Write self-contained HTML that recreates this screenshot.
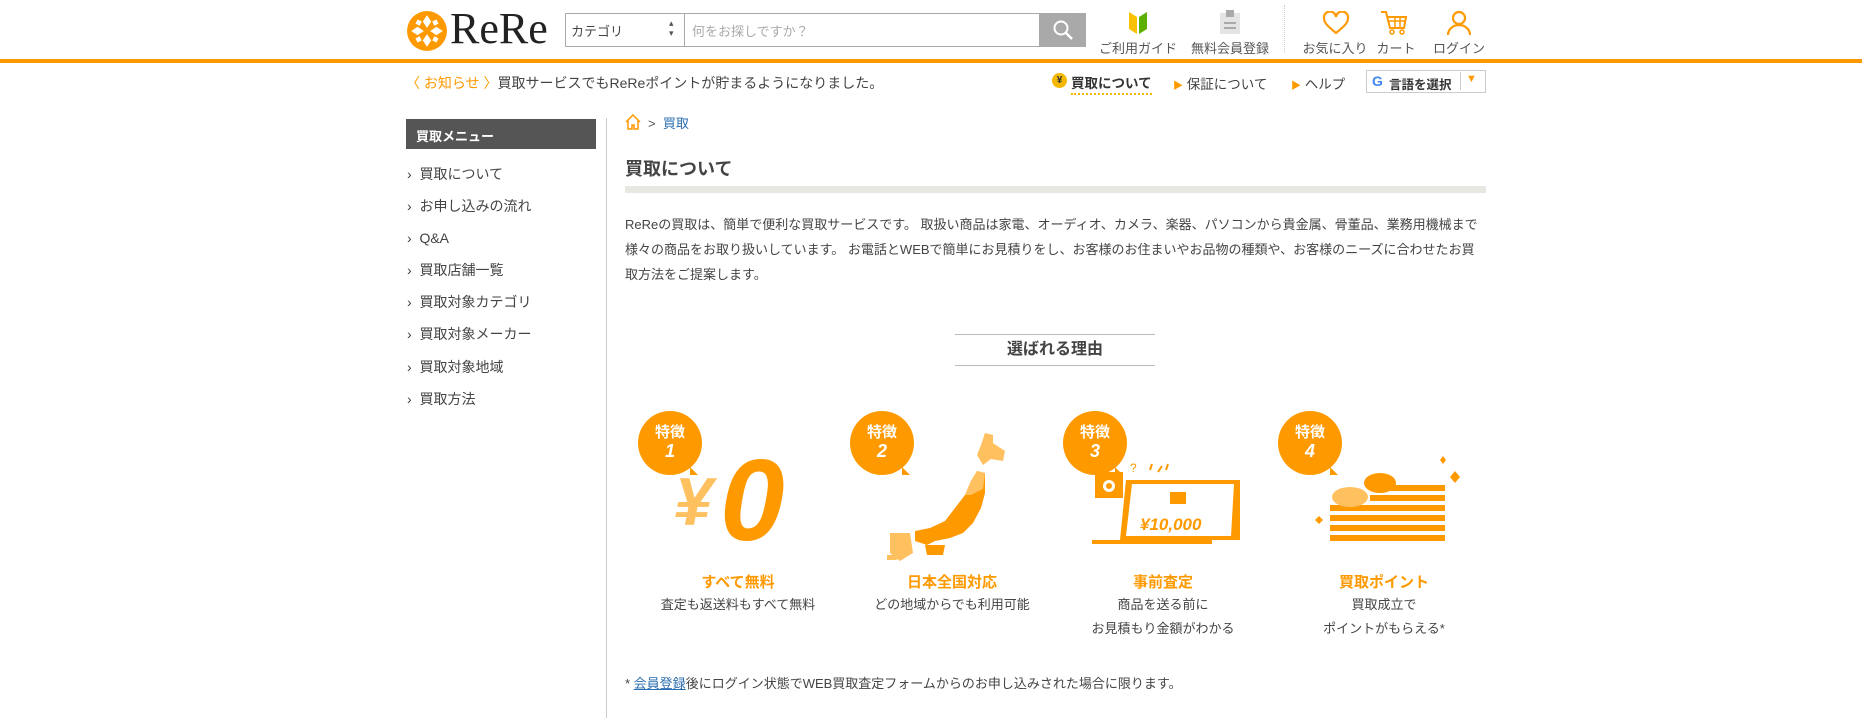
<!DOCTYPE html>
<html><head><meta charset="utf-8"><style>
*{margin:0;padding:0;box-sizing:border-box}
body{width:1862px;height:707px;overflow:hidden;background:#fff;font-family:"Liberation Sans","Noto Sans CJK JP",sans-serif;color:#333;position:relative}
.a{position:absolute;white-space:nowrap}
.hl{font-size:13px;color:#555;text-align:center;transform:translateX(-50%)}
.side{font-size:14px;color:#444}
.ft{color:#f90;font-weight:bold;font-size:15px;transform:translateX(-50%);text-align:center}
.fd{font-size:13px;color:#444;transform:translateX(-50%);text-align:center;line-height:24px}
.bub{position:absolute;width:64px;height:64px;border-radius:50%;background:#f90;color:#fff;font-weight:bold;text-align:center;font-size:15px;line-height:19px;padding-top:12px}
.bub:after{content:"";position:absolute;right:4px;bottom:0;border-left:8px solid #f90;border-top:8px solid transparent;border-bottom:0 solid transparent}
.bub i{font-size:18px}
</style></head><body>
<!-- logo -->
<svg class="a" style="left:406px;top:10px" width="42" height="42" viewBox="0 0 40 40"><circle cx="20" cy="20" r="19" fill="#f90"/><g fill="#fff"><path d="M20 5l4 6-4 6-4-6z"/><path d="M20 23l4 6-4 6-4-6z"/><path d="M5 20l6-4 6 4-6 4z"/><path d="M23 20l6-4 6 4-6 4z"/><path d="M11 9l4 2-2 4-4-2z"/><path d="M29 9l2 4-4 2-2-4z"/><path d="M9 27l4-2 2 4-4 2z"/><path d="M27 25l4 2-2 4-4-2z"/></g></svg>
<div class="a" style="left:450px;top:3px;font-family:'Liberation Serif',serif;font-size:44px;color:#222">ReRe</div>
<!-- search -->
<div class="a" style="left:565px;top:13px;width:475px;height:34px;border:1px solid #aaa"></div>
<div class="a" style="left:684px;top:13px;width:1px;height:34px;background:#aaa"></div>
<div class="a" style="left:571px;top:21px;font-size:13px;color:#444">カテゴリ</div>
<div class="a" style="left:669px;top:18px;font-size:9px;color:#555;line-height:10px">▴<br>▾</div>
<div class="a" style="left:692px;top:21px;font-size:13px;color:#aaa">何をお探しですか？</div>
<div class="a" style="left:1040px;top:13px;width:46px;height:34px;background:#a9a9a9"></div>
<svg class="a" style="left:1052px;top:19px" width="22" height="22"><circle cx="9" cy="9" r="6.5" stroke="#fff" stroke-width="2" fill="none"/><path d="M14 14l6 6" stroke="#fff" stroke-width="2.5"/></svg>
<!-- header links -->
<svg class="a" style="left:1128px;top:10px" width="20" height="25"><path d="M1 2l8 5v17l-8-5z" fill="#fbc000"/><path d="M19 2l-8 5v17l8-5z" fill="#5cb000"/></svg>
<div class="a hl" style="left:1138px;top:38px">ご利用ガイド</div>
<svg class="a" style="left:1219px;top:9px" width="22" height="26"><rect x="1" y="4" width="20" height="21" fill="#e4e4e4"/><rect x="7" y="1" width="8" height="7" fill="#aaa"/><rect x="5" y="13" width="12" height="2" fill="#aaa"/><rect x="5" y="18" width="12" height="2" fill="#aaa"/></svg>
<div class="a hl" style="left:1230px;top:38px">無料会員登録</div>
<div class="a" style="left:1284px;top:5px;height:48px;border-left:1px dotted #ccc"></div>
<svg class="a" style="left:1322px;top:11px" width="28" height="24"><path d="M14 22C4 14 2 11 2 7a6 6 0 0 1 12-1a6 6 0 0 1 12 1c0 4-2 7-12 15z" fill="none" stroke="#f90" stroke-width="2.2"/></svg>
<div class="a hl" style="left:1335px;top:38px">お気に入り</div>
<svg class="a" style="left:1380px;top:10px" width="28" height="26"><path d="M1 2h5l4 16h14l2-11H8" fill="none" stroke="#f90" stroke-width="2"/><path d="M9 11h16M15 7v11M20 7v11" stroke="#f90" stroke-width="1.5"/><circle cx="12" cy="22" r="2" fill="none" stroke="#f90" stroke-width="1.5"/><circle cx="22" cy="22" r="2" fill="none" stroke="#f90" stroke-width="1.5"/></svg>
<div class="a hl" style="left:1396px;top:38px">カート</div>
<svg class="a" style="left:1446px;top:10px" width="26" height="26"><circle cx="13" cy="8" r="6" fill="none" stroke="#f90" stroke-width="2.2"/><path d="M2 25a11 10 0 0 1 22 0" fill="none" stroke="#f90" stroke-width="2.2"/></svg>
<div class="a hl" style="left:1459px;top:38px">ログイン</div>
<div class="a" style="left:0;top:59px;width:1862px;height:4px;background:#f90"></div>
<!-- notice -->
<div class="a" style="left:406px;top:73px;font-size:14px;color:#444"><span style="color:#f90">〈 お知らせ 〉</span>買取サービスでもReReポイントが貯まるようになりました。</div>
<div class="a" style="left:1052px;top:73px;width:15px;height:15px;border-radius:50%;background:#f5b800;color:#333;font-size:10px;text-align:center;line-height:15px;font-weight:bold">¥</div>
<div class="a" style="left:1071px;top:72px;font-size:13.5px;font-weight:bold;color:#333;border-bottom:2px dotted #f5b800;padding-bottom:1px">買取について</div>
<div class="a" style="left:1173px;top:73px;font-size:13.5px;color:#444"><span style="color:#f90;font-size:10px">▶</span> 保証について</div>
<div class="a" style="left:1291px;top:73px;font-size:13.5px;color:#444"><span style="color:#f90;font-size:10px">▶</span> ヘルプ</div>
<div class="a" style="left:1366px;top:70px;width:120px;height:23px;border:1px solid #ccc"></div>
<div class="a" style="left:1372px;top:73px;font-size:14px;font-weight:bold;color:#4285f4">G</div>
<div class="a" style="left:1389px;top:74px;font-size:12.5px;font-weight:bold;color:#333">言語を選択</div>
<div class="a" style="left:1460px;top:72px;height:18px;border-left:1px solid #ccc"></div>
<div class="a" style="left:1466px;top:73px;font-size:11px;color:#f90">▼</div>
<!-- sidebar -->
<div class="a" style="left:406px;top:119px;width:190px;height:30px;background:#555;color:#fff;font-size:13px;font-weight:bold;padding:7px 10px">買取メニュー</div>
<div class="a side" style="left:407px;top:158px;line-height:32.1px">
<div>›&nbsp; 買取について</div><div>›&nbsp; お申し込みの流れ</div><div>›&nbsp; Q&amp;A</div><div>›&nbsp; 買取店舗一覧</div><div>›&nbsp; 買取対象カテゴリ</div><div>›&nbsp; 買取対象メーカー</div><div>›&nbsp; 買取対象地域</div><div>›&nbsp; 買取方法</div></div>
<div class="a" style="left:606px;top:118px;width:1px;height:600px;background:#ccc"></div>
<!-- main -->
<svg class="a" style="left:625px;top:114px" width="16" height="16"><path d="M1 8L8 1l7 7M3 6v9h4v-4h2v4h4V6" fill="none" stroke="#f90" stroke-width="1.5"/></svg>
<div class="a" style="left:648px;top:113px;font-size:13px;color:#555">&gt; &nbsp;<span style="color:#2a6db0">買取</span></div>
<div class="a" style="left:625px;top:155px;font-size:18px;font-weight:bold;color:#444">買取について</div>
<div class="a" style="left:625px;top:186px;width:861px;height:7px;background:#e8e8e2"></div>
<div class="a" style="left:625px;top:212px;font-size:13px;color:#444;line-height:25px;white-space:normal;width:880px">ReReの買取は、簡単で便利な買取サービスです。 取扱い商品は家電、オーディオ、カメラ、楽器、パソコンから貴金属、骨董品、業務用機械まで<br>様々の商品をお取り扱いしています。 お電話とWEBで簡単にお見積りをし、お客様のお住まいやお品物の種類や、お客様のニーズに合わせたお買<br>取方法をご提案します。</div>
<div class="a" style="left:955px;top:334px;width:200px;height:32px;border-top:1px solid #bbb;border-bottom:1px solid #bbb;text-align:center;font-size:16px;font-weight:bold;color:#444;line-height:30px">選ばれる理由</div>
<!-- features -->
<div class="bub" style="left:638px;top:411px">特徴<br><i>1</i></div>
<div class="bub" style="left:850px;top:411px">特徴<br><i>2</i></div>
<div class="bub" style="left:1063px;top:411px">特徴<br><i>3</i></div>
<div class="bub" style="left:1278px;top:411px">特徴<br><i>4</i></div>
<div class="a" style="left:674px;top:462px;font-size:68px;font-weight:bold;color:#ffc060;font-style:italic;line-height:80px">¥</div>
<div class="a" style="left:720px;top:438px;font-size:116px;font-weight:bold;color:#f90;font-style:italic;line-height:124px">0</div>
<svg class="a" style="left:885px;top:433px" width="140" height="130"><path d="M100 0L108 2L108 10L120 18L118 28L106 26L98 32L92 22L96 12Z" fill="#ffc060"/><path d="M92 38L100 40L100 60L96 75L88 90L78 100L65 105L50 108L42 112L30 108L30 98L45 95L60 88L70 75L80 62L86 48Z" fill="#f90"/><path d="M92 38L100 40L98 56L86 62L80 62L86 48Z" fill="#ffc060"/><path d="M40 112L60 112L58 122L42 122Z" fill="#f90"/><path d="M5 100L25 100L28 120L15 128L5 120Z" fill="#ffc060"/><rect x="2" y="122" width="10" height="5" fill="#ffc060"/></svg>
<svg class="a" style="left:1090px;top:460px" width="150" height="85"><rect x="5" y="12" width="28" height="26" fill="#f90"/><circle cx="19" cy="26" r="6" fill="#fff"/><circle cx="19" cy="26" r="3" fill="#f90"/><text x="40" y="12" fill="#f90" font-size="12" font-family="Liberation Sans">?</text><path d="M60 10l2 -6M68 12l4 -6M76 10l2 -6" stroke="#f90" stroke-width="2"/><path d="M36 20h118l-4 60H30z" fill="#f90"/><path d="M42 24h102l-3 52H36z" fill="#fff"/><rect x="80" y="32" width="16" height="12" fill="#f90"/><text x="50" y="70" fill="#f90" font-size="17" font-weight="bold" font-style="italic" font-family="Liberation Sans">¥10,000</text><rect x="2" y="80" width="120" height="4" fill="#f90"/></svg>
<svg class="a" style="left:1300px;top:455px" width="165" height="90"><g fill="#f90"><rect x="70" y="30" width="75" height="6"/><rect x="70" y="40" width="75" height="6"/><rect x="70" y="50" width="75" height="6"/><rect x="70" y="60" width="75" height="6"/><rect x="70" y="70" width="75" height="6"/><rect x="30" y="50" width="40" height="6"/><rect x="30" y="60" width="40" height="6"/><rect x="30" y="70" width="40" height="6"/><rect x="30" y="80" width="115" height="6"/></g><ellipse cx="50" cy="42" rx="18" ry="10" fill="#ffc060"/><ellipse cx="80" cy="28" rx="16" ry="10" fill="#f90"/><path d="M15 65l4-4 4 4-4 4zM150 22l5-6 5 6-5 6zM140 5l3-4 3 4-3 4z" fill="#f90"/></svg>
<div class="a ft" style="left:738px;top:571px">すべて無料</div>
<div class="a fd" style="left:738px;top:593px">査定も返送料もすべて無料</div>
<div class="a ft" style="left:952px;top:571px">日本全国対応</div>
<div class="a fd" style="left:952px;top:593px">どの地域からでも利用可能</div>
<div class="a ft" style="left:1163px;top:571px">事前査定</div>
<div class="a fd" style="left:1163px;top:593px">商品を送る前に<br>お見積もり金額がわかる</div>
<div class="a ft" style="left:1384px;top:571px">買取ポイント</div>
<div class="a fd" style="left:1384px;top:593px">買取成立で<br>ポイントがもらえる*</div>
<div class="a" style="left:625px;top:673px;font-size:13px;color:#444">* <span style="color:#2a6db0;text-decoration:underline">会員登録</span>後にログイン状態でWEB買取査定フォームからのお申し込みされた場合に限ります。</div>
</body></html>
